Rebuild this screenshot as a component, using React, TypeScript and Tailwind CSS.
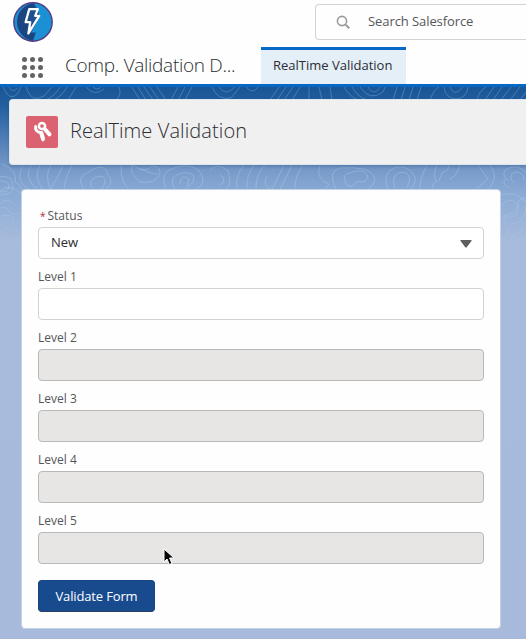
import React from "react";

const sans = "font-['Open_Sans','Noto_Sans',sans-serif]";

function Contours() {
  return (
    <svg className="absolute left-0 top-0 h-[190px] w-[526px]" viewBox="0 87 526 190" fill="none" aria-hidden="true">
      <defs>
        <linearGradient id="fade" x1="0" y1="87" x2="0" y2="277" gradientUnits="userSpaceOnUse">
          <stop offset="0" stopColor="#8fbbe6" stopOpacity=".34" />
          <stop offset=".5" stopColor="#c0d8f2" stopOpacity=".34" />
          <stop offset="1" stopColor="#c0d8f2" stopOpacity="0" />
        </linearGradient>
      </defs>
      <g stroke="url(#fade)" strokeWidth="1">
        <path d="M3 87q7 16 15 6l3-6M9 87q4 7 8 1M26 87q5 17 18 9l8-9M60 87q-5 9-14 13M67 87q-5 9-13 13M76 87l-8 13M86 87q8 10 18 2M93 87q5 4 8 0M119 87q3 8-3 13M132 87l8 13M138 87l8 13M144 87l9 13M150 87l9 13M157 87l9 13M178 87l-7 13M185 87l-7 13M192 87l-7 13M212 87q6 14 19 11l9-11M219 87q6 10 16 0M246 87q7 8 12 0" />
        <path d="M270 100l9-13M277 100l9-13M284 100l9-13M292 100l8-13M309 87v13M319 87l3 13M330 87l2 13M344 87q6 10 14 13M352 87q9 16 24 13M360 87q10 15 23 5l2-5M368 87q6 10 12 0M397 87l-4 13M405 87l-4 13M413 87l-4 13M421 87l-4 13M430 100q4-11 9-13M444 87q1 11 12 12q11-1 12-12M450 87q4 11 13 0M477 100q2-9 9-13M485 100l9-13M493 100l9-13M501 100l10-13M510 100l10-13M520 100l6-8" />
        <path d="M2 164q16 6 13 18q7 3 7 11M0 177q13-3 13 10q0 8-13 8M0 181q9-1 9 6q0 5-9 5M23 165q-9 18 8 25M31 165q-8 13 7 25M40 165q-7 12 3 25M51 165q-7 11 0 25M63 165q-5 13-13 25M72 165q-8 16-8 25M84 190q-9-14 5-18q15-11 19 3q7 7-3 15M94 190q-8-8 2-13q10-3 9 6l-4 7M121 165q-1 18 9 25M132 165q14 9 20 1q11 1 7 10q-5 8-19 6q-11-8-8-17M140 169q12 5 18 5M166 190q-7-19 8-22q17-6 26 4q8 11-5 18M175 190q-8-14 7-17q15-2 11 9l-9 8M180 184q1-11 9-5l-2 7M210 170q8-8 18 1q5 14-3 19M220 175q8 5 0 10M237 190q-2-15 7-25M247 190q-1-15 7-25M256 190q-1-15 9-25" />
        <path d="M267 176q-6 11 6 14M284 165l-12 25M292 165l-12 25M303 165q-9 13-8 25M320 165q-5 14 9 19l-4 6M336 190q-9-19 4-22q13-1 24 1q15 6 9 16l-6 5M346 184q-6-10 7-12q12-4 15 5q-2 7-11 4q-5 9-11 3M388 190q-7-18 8-23q13-2 19 10q1 10-6 13M395 188q-4-10 3-15q10-3 12 6l-3 9M427 165q-8 14-7 25M437 165q-5 11 0 16q-6 3-4 9M449 165q0 6-7 8l-3 8M460 165q-3 11-10 14M478 165l10 14l-13 11M490 165q10 12-2 25M508 181q-9-9 1-13q10-4 17 5M508 187q-6-3-3-8M514 183q-7-7 1-11q9 0 9 8" />
        <path d="M0 208q6-2 9 3q5 6 13 1M1 217q6-4 12 1q2 8-8 10l-5 8M0 203q8-5 13 0M0 249q10-11 22-10M7 253q5-9 15-8M0 191q10-9 22 4M501 206q7-9 14-4q6 6-3 11l-11 5M505 225q-4-7 6-8q8-1 7-11q-1-8 8-8M508 234q-3-10 8-11q10-4 10-17M512 244q-2-13 9-12l5-5M502 195q12-5 24 7M516 249q1-10 10-11" />
      </g>
    </svg>
  );
}

function Logo() {
  return (
    <svg className="size-10" viewBox="0 0 40 40" aria-hidden="true">
      <circle cx="20" cy="20" r="19.2" fill="#1b90d4" />
      <path d="M21 1A19.2 19.2 0 0 0 20 39L22.8 30.5H18L27 14.5Z" fill="#1b4580" />
      <path d="M16.2 7.2h8.6l-2.6 6.6h4L15.4 31.4l1.8-11.2h-4.6Z" fill="#1f4f8e" stroke="#fff" strokeWidth="2.3" strokeLinejoin="round" />
      <circle cx="20" cy="20" r="19.2" fill="none" stroke="#563b80" strokeWidth="1.4" />
    </svg>
  );
}

function Field({ label, disabled = false }: { label: string; disabled?: boolean }) {
  return (
    <div className="h-[61px]">
      <div className="h-[21px] text-[12px] leading-[20px] text-[#55565a]">{label}</div>
      <div className={disabled ? "h-8 rounded border border-[#bbb9b7] bg-[#e8e6e5]" : "h-8 rounded border border-[#d3d2d1] bg-white"} />
    </div>
  );
}

export default function App() {
  return (
    <div className={`relative h-[639px] w-[526px] overflow-hidden bg-[#fefefe] text-[#2b2d30] ${sans}`}>
      <header className="h-[84px]">
        <div className="flex h-[47px] items-start justify-between">
          <div className="pl-[13px] pt-[2px]"><Logo /></div>
          <div className="mt-1 flex h-9 w-[211px] items-center rounded-l border border-r-0 border-[#d4d3d2] pl-5">
            <svg className="mt-px size-[15px]" viewBox="0 0 15 15" fill="none" stroke="#99999c" aria-hidden="true">
              <circle cx="6" cy="6" r="4.6" strokeWidth="1.6" />
              <path d="m9.6 9.6 3.6 3.6" strokeWidth="2" />
            </svg>
            <span className="ml-[17px] text-[13px] tracking-[-0.08px] text-[#55565a]">Search Salesforce</span>
          </div>
        </div>
        <nav className="flex h-[37px]">
          <div className="ml-[22px] mt-[10px] grid h-[21px] w-[21px] grid-cols-3 gap-[3px]">
            {Array.from({ length: 9 }, (_, i) => <i key={i} className="size-[5px] rounded-full bg-[#646364]" />)}
          </div>
          <div className="ml-[22px] w-[196px] whitespace-nowrap text-[19px] font-light leading-[37px] tracking-[-0.3px]">Comp. Validation D...</div>
          <div className="h-[37px] w-[145px] border-t-[3px] border-[#0569c8] bg-[#e5eff8] pl-3 text-[13px] leading-[31px]">RealTime Validation</div>
        </nav>
      </header>
      <div className="h-[3px] bg-[#0767c4]" />
      <main className="relative h-[552px] bg-[linear-gradient(180deg,#195595_0px,#2460a0_20px,#7297c7_78px,#8aaad4_105px,#a7bbdc_155px,#a7badb_552px)] pt-3">
        <Contours />
        <section className="relative ml-[9px] flex h-[66px] items-center rounded-l-[4px] border border-r-0 border-[#dce6ef] bg-[#f0f0f0] pl-4 shadow-[0_2px_3px_rgba(20,55,100,0.25)]">
          <svg className="size-8 rounded-[2px] bg-[#db6271]" viewBox="0 0 32 32" fill="none" stroke="#fff" aria-hidden="true">
            <circle cx="16" cy="10" r="3.1" strokeWidth="2.5" />
            <path d="m18.8 13 4.7 5.3" strokeWidth="4" strokeLinecap="round" />
            <path d="M9.7 10.6c-.7 3.6 1.1 5.2 5 6.1l2.2 7.2" strokeWidth="3" strokeLinecap="round" strokeLinejoin="round" />
            <path d="m15.4 17 1.6 5.5" strokeWidth="4" strokeLinecap="round" />
          </svg>
          <h1 className="ml-3 whitespace-nowrap pb-[2px] text-[20px] font-light tracking-[0.1px]">RealTime Validation</h1>
        </section>
        <section className="relative ml-[21px] mt-6 h-[440px] w-[480px] rounded-[4px] border border-[#c3d2e8] bg-[#fefefe] px-4 pt-4">
          <div className="h-[61px]">
            <div className="h-[21px] text-[12px] leading-[20px] text-[#55565a]"><span className="ml-0.5 mr-[2px] text-[10px] text-[#b5262d]">*</span>Status</div>
            <div className="flex h-8 items-center justify-between rounded border border-[#d3d2d1] bg-white pl-3 pr-[11px] text-[13px]">
              <span>New</span>
              <svg className="mt-[2px] h-[8px] w-[12px]" viewBox="0 0 12 8" aria-hidden="true"><path d="M1 0h10q1 0 .5 1L6.7 7.3q-.7.7-1.4 0L.5 1Q0 0 1 0Z" fill="#5e5e60" /></svg>
            </div>
          </div>
          <Field label="Level 1" />
          <Field label="Level 2" disabled />
          <Field label="Level 3" disabled />
          <Field label="Level 4" disabled />
          <Field label="Level 5" disabled />
          <button className="mt-2 block h-8 w-[117px] rounded border border-[#164784] border-b-[#2c3f62] bg-[#184b8e] text-[13px] font-medium leading-[28px] tracking-[-0.15px] text-white">Validate Form</button>
        </section>
      </main>
      <svg className="absolute left-[163px] top-[548px] h-[18px] w-[12px]" viewBox="0 0 12 18" aria-hidden="true">
        <path d="M1 1v13l3-3 2.3 5.5 2.6-1.1L6.6 10H11Z" fill="#050505" stroke="#fff" strokeWidth="1" />
      </svg>
    </div>
  );
}
